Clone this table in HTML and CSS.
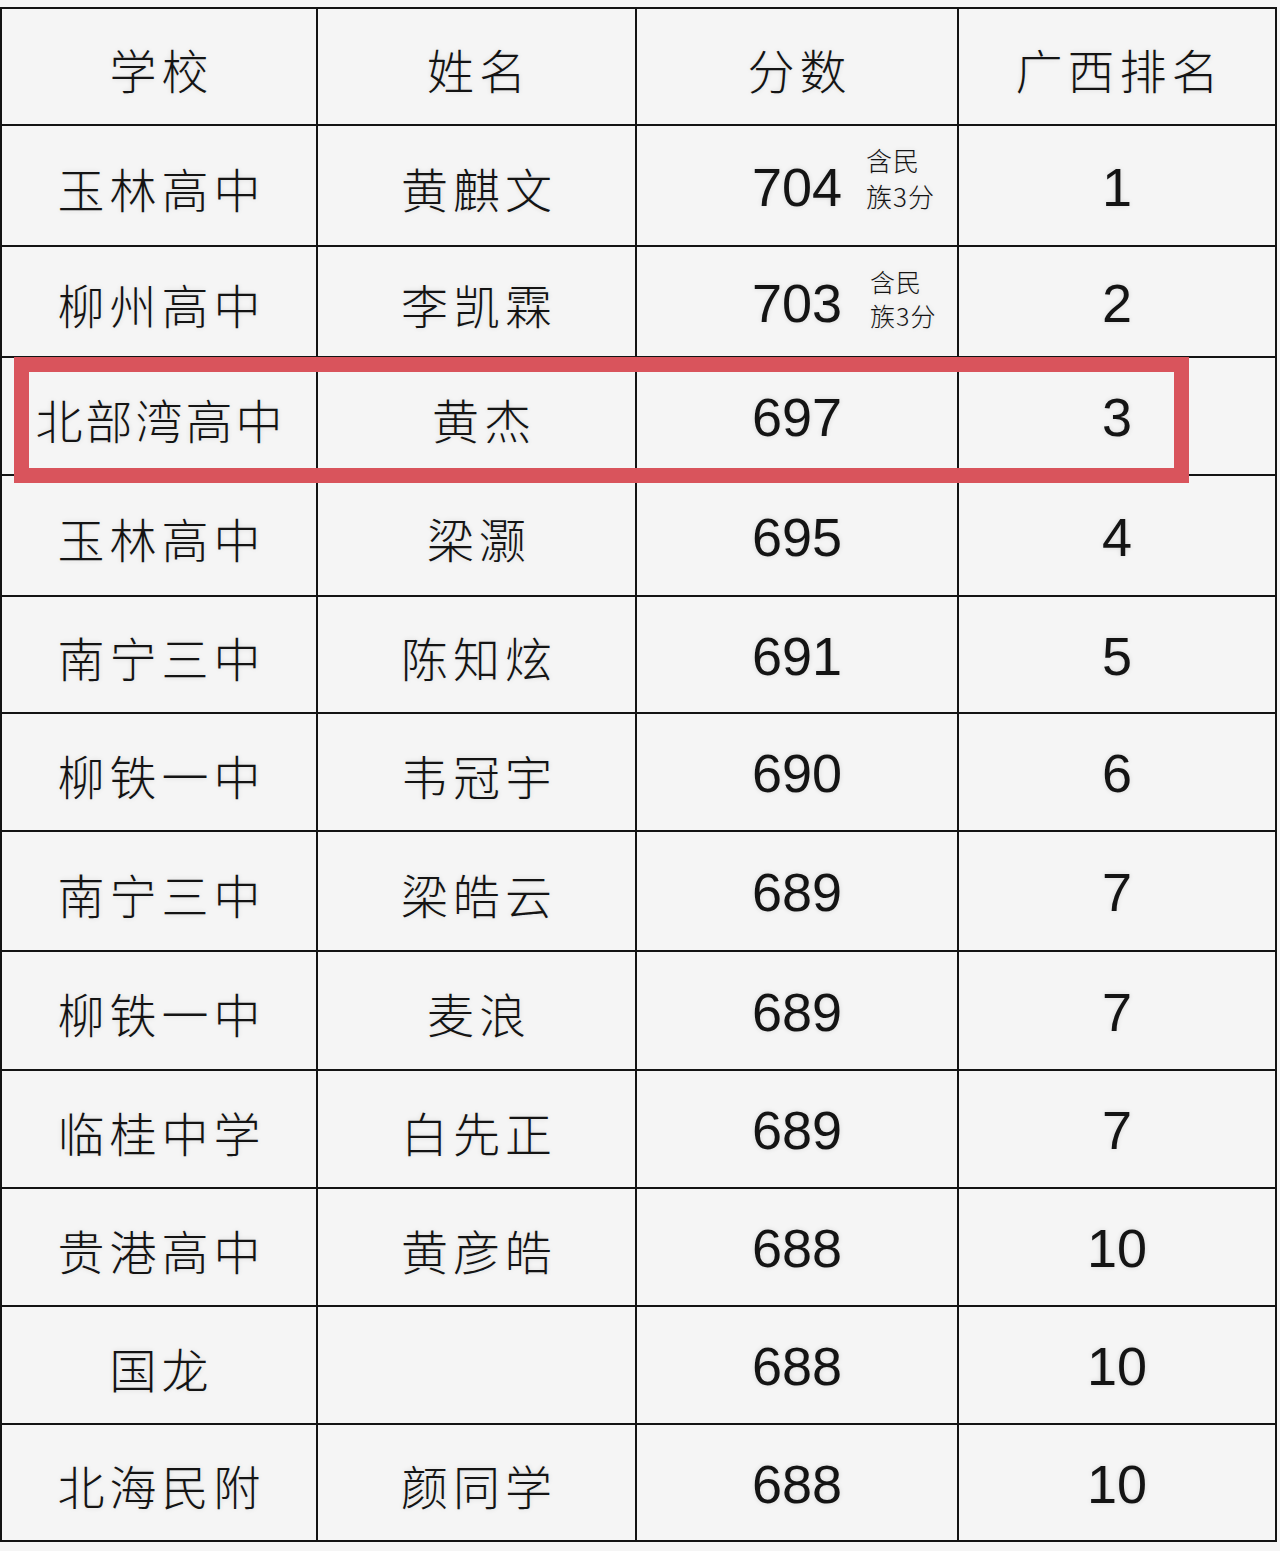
FILE: index.html
```html
<!DOCTYPE html>
<html lang="zh">
<head>
<meta charset="utf-8">
<title>广西排名</title>
<link rel="stylesheet" href="styles.css">
</head>
<body>
<div class="wrap">
  <div class="grid">
    <div class="cell zh">学校</div><div class="cell zh">姓名</div><div class="cell zh">分数</div><div class="cell zh">广西排名</div>

    <div class="cell zh">玉林高中</div><div class="cell zh">黄麒文</div><div class="cell num score">704<span class="note n1">含民<br>族3分</span></div><div class="cell num">1</div>
    <div class="cell zh">柳州高中</div><div class="cell zh">李凯霖</div><div class="cell num score">703<span class="note n2">含民<br>族3分</span></div><div class="cell num">2</div>
    <div class="cell zh tight">北部湾高中</div><div class="cell zh shift">黄杰</div><div class="cell num">697</div><div class="cell num">3</div>
    <div class="cell zh">玉林高中</div><div class="cell zh">梁灏</div><div class="cell num">695</div><div class="cell num">4</div>
    <div class="cell zh">南宁三中</div><div class="cell zh">陈知炫</div><div class="cell num">691</div><div class="cell num">5</div>
    <div class="cell zh">柳铁一中</div><div class="cell zh">韦冠宇</div><div class="cell num">690</div><div class="cell num">6</div>
    <div class="cell zh">南宁三中</div><div class="cell zh">梁皓云</div><div class="cell num">689</div><div class="cell num">7</div>
    <div class="cell zh">柳铁一中</div><div class="cell zh">麦浪</div><div class="cell num">689</div><div class="cell num">7</div>
    <div class="cell zh">临桂中学</div><div class="cell zh">白先正</div><div class="cell num">689</div><div class="cell num">7</div>
    <div class="cell zh">贵港高中</div><div class="cell zh">黄彦皓</div><div class="cell num">688</div><div class="cell num">10</div>
    <div class="cell zh">国龙</div><div class="cell zh"></div><div class="cell num">688</div><div class="cell num">10</div>
    <div class="cell zh">北海民附</div><div class="cell zh">颜同学</div><div class="cell num">688</div><div class="cell num">10</div>
  </div>
  <div class="highlight"></div>
</div>
</body>
</html>
```

FILE: styles.css
```css
html, body {
  margin: 0;
  padding: 0;
  background: #f5f5f5;
}
body {
  width: 1280px;
  height: 1551px;
  overflow: hidden;
}
.wrap {
  position: relative;
  padding-top: 7px;
}
.grid {
  display: grid;
  width: 1273px;
  padding: 2px;
  gap: 2px;
  background: #141414;
  grid-template-columns: 314px 317px 320px 316px;
  grid-template-rows: 115px 119px 109px 116px 119px 115px 116px 118px 117px 116px 116px 116px 115px;
}
.cell {
  background: #f5f5f5;
  display: flex;
  align-items: center;
  justify-content: center;
  color: #141414;
  text-shadow: 0 0 5px rgba(0, 0, 0, 0.12);
}
.zh {
  font-family: "Noto Sans CJK SC", "Noto Sans", sans-serif;
  font-weight: 200;
  font-size: 47px;
  letter-spacing: 5px;
  padding-left: 5px;
  padding-top: 4px;
}
.zh.tight {
  letter-spacing: 3px;
  padding-left: 3px;
}
.zh.shift {
  padding-left: 15px;
}
.num {
  font-family: "Liberation Sans", Arial, sans-serif;
  font-size: 54px;
  padding-top: 2px;
}
.score {
  position: relative;
}
.note {
  position: absolute;
  font-family: "Noto Sans CJK SC", "Noto Sans", sans-serif;
  font-weight: 300;
  font-size: 26px;
  line-height: 36px;
  letter-spacing: 1px;
  text-align: left;
}
.n1 {
  left: 229px;
  top: 16px;
}
.n2 {
  left: 233px;
  top: 17px;
  line-height: 34px;
  font-size: 25px;
}
.highlight {
  position: absolute;
  left: 14px;
  top: 357px;
  width: 1145px;
  height: 96px;
  border: 15px solid #d9545c;
}
```
